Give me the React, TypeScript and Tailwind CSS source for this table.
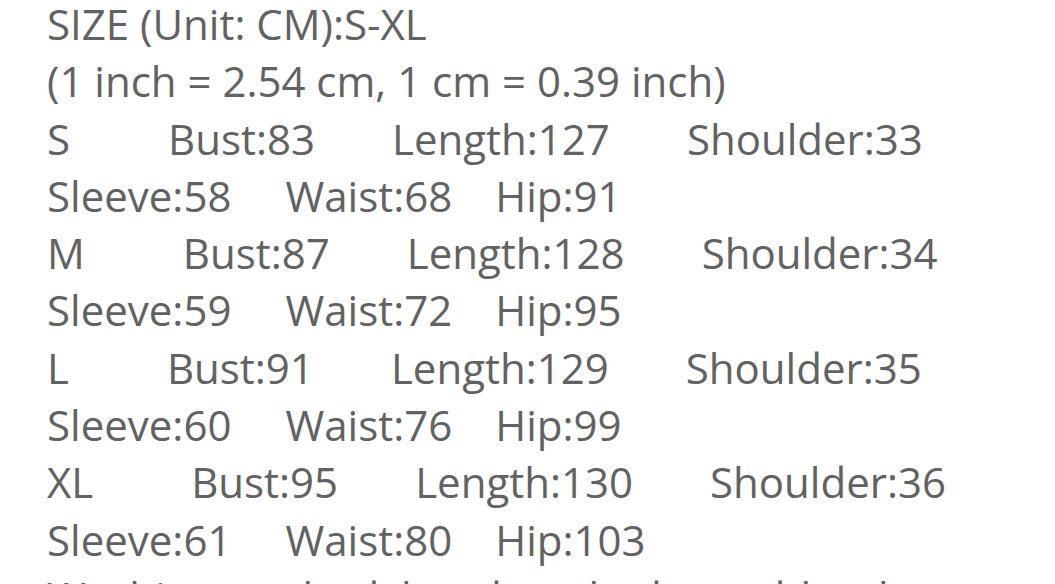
import React from "react";

const sizes = [
  { s: "S", bust: 83, len: 127, sh: 33, sl: 58, w: 68, hip: 91 },
  { s: "M", bust: 87, len: 128, sh: 34, sl: 59, w: 72, hip: 95 },
  { s: "L", bust: 91, len: 129, sh: 35, sl: 60, w: 76, hip: 99 },
  { s: "XL", bust: 95, len: 130, sh: 36, sl: 61, w: 80, hip: 103 },
];

export default function App() {
  return (
    <div className="w-[1055px] h-[584px] overflow-hidden bg-white pl-[47px] text-[42px] leading-[57.3px] text-[#626262] font-['Open_Sans',sans-serif]">
      <div className="-mt-[5px]">
        <div>SIZE (Unit: CM):S-XL</div>
        <div>(1 inch = 2.54 cm, 1 cm = 0.39 inch)</div>
        {sizes.map((r) => (
          <React.Fragment key={r.s}>
            <div className="flex whitespace-nowrap">
              <span>{r.s}</span>
              <span className="ml-[98px]">Bust:{r.bust}</span>
              <span className="ml-[77px]">Length:{r.len}</span>
              <span className="ml-[77px]">Shoulder:{r.sh}</span>
            </div>
            <div className="flex whitespace-nowrap">
              <span>Sleeve:{r.sl}</span>
              <span className="ml-[54px]">Waist:{r.w}</span>
              <span className="ml-[43px]">Hip:{r.hip}</span>
            </div>
          </React.Fragment>
        ))}
        <div className="whitespace-nowrap">Washing method: hand wash, do not bleach</div>
      </div>
    </div>
  );
}
